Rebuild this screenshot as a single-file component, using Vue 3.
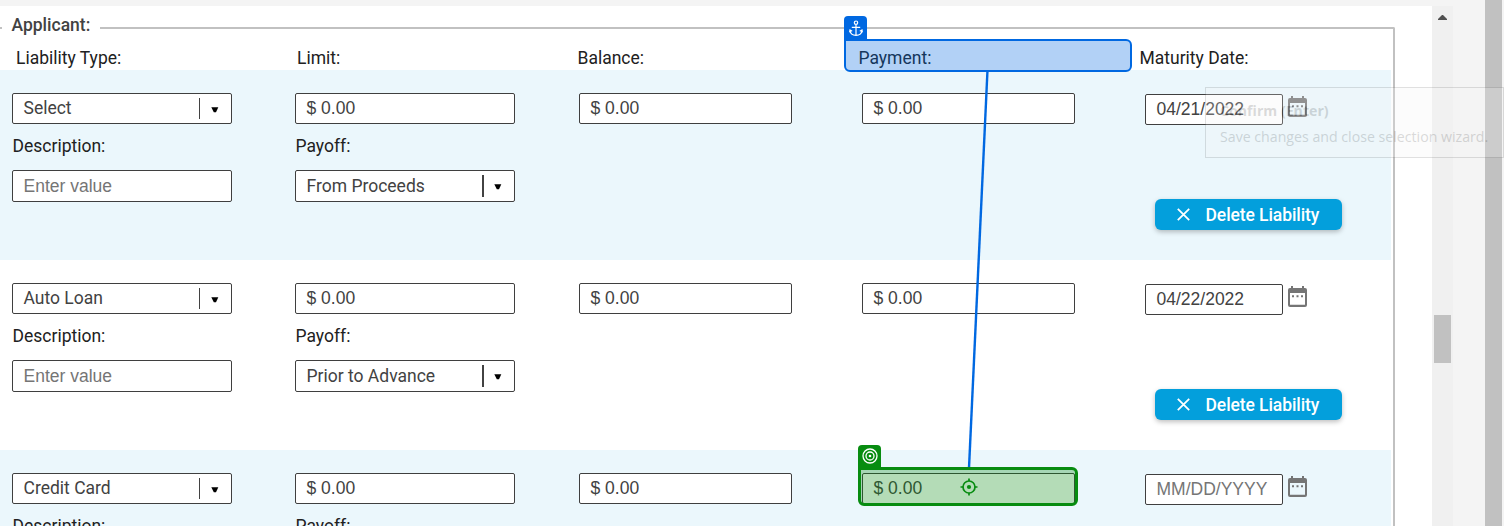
<script setup>
const headings = ['Liability Type:', 'Limit:', 'Balance:', 'Payment:', 'Maturity Date:']
const rows = [
  { type: 'Select', payoff: 'From Proceeds', date: '04/21/2022' },
  { type: 'Auto Loan', payoff: 'Prior to Advance', date: '04/22/2022' },
  { type: 'Credit Card', payoff: 'Select', date: '' }
]
</script>

<template>
  <div class="page">
    <div class="content">
      <div class="fieldset">
        <div class="legend"><i class="stub"></i><b>Applicant:</b><i class="rule"></i></div>
        <div class="body">
          <div class="grid headings">
            <span v-for="h in headings" :key="h">{{ h }}</span>
          </div>
          <div v-for="(row, i) in rows" :key="i" class="liability" :class="{ tinted: i % 2 === 0 }">
            <div class="grid">
              <div class="cell">
                <div class="box select">
                  <span>{{ row.type }}</span><i class="divider"></i>
                  <svg class="caret" width="8" height="6" viewBox="0 0 8 6"><path d="M.3.2h7L5 5.2H2.8z" /></svg>
                </div>
                <label>Description:</label>
                <div class="box input tall placeholder">Enter value</div>
              </div>
              <div class="cell">
                <div class="box input">$ 0.00</div>
                <label>Payoff:</label>
                <div class="box select tall">
                  <span>{{ row.payoff }}</span><i class="divider thick"></i>
                  <svg class="caret" width="8" height="6" viewBox="0 0 8 6"><path d="M.3.2h7L5 5.2H2.8z" /></svg>
                </div>
              </div>
              <div class="cell"><div class="box input">$ 0.00</div></div>
              <div class="cell"><div class="box input">$ 0.00</div></div>
              <div class="cell last">
                <div class="dateline">
                  <div class="box input date" :class="{ placeholder: !row.date }">{{ row.date || 'MM/DD/YYYY' }}</div>
                  <svg width="19" height="21" viewBox="0 0 19 21">
                    <path fill="#757575" fill-rule="evenodd" d="M3 0h2v2h9V0h2v2h1q2 0 2 2v15q0 2-2 2H2q-2 0-2-2V4q0-2 2-2h1zM2 7v11.800h15V7z" />
                    <path fill="#757575" d="M4 9.300h2v2H4zM8.500 9.300h2v2h-2zM13 9.300h2v2h-2z" />
                  </svg>
                </div>
                <button type="button">
                  <svg width="13" height="13" viewBox="0 0 13 13"><path d="M.8.8l11.400 11.400M12.200.8L.8 12.200" /></svg>
                  Delete Liability
                </button>
              </div>
            </div>
          </div>
        </div>
      </div>
    </div>
    <div class="scrollbar">
      <svg width="9" height="5" viewBox="0 0 9 5"><path d="M4 0h1l4 4v1H0V4z" fill="#505050" /></svg>
      <i class="thumb"></i>
    </div>
    <div class="outer-scroll"></div>

    <svg class="link" width="1504" height="526" viewBox="0 0 1504 526">
      <path d="M987.500 70L969 468" stroke="#0068e1" stroke-width="2.400" fill="none" />
    </svg>
    <div class="mark anchor">
      <div class="tag">
        <svg width="14" height="17" viewBox="0 0 14 17" fill="none" stroke="#fff" stroke-width="1.200">
          <circle cx="7" cy="2.700" r="1.700" />
          <path d="M7 4.400v11M2.800 7.300h8.400M1 10.500q.5 4.600 6 4.900q5.500-.3 6-4.900M.6 12.300l.4-2.300 2.200 1.200M13.400 12.300L13 10l-2.200 1.200" />
        </svg>
      </div>
    </div>
    <div class="mark target">
      <div class="tag">
        <svg width="16" height="16" viewBox="0 0 16 16" fill="none" stroke="#fff" stroke-width="1.300">
          <circle cx="8" cy="8" r="7" /><circle cx="8" cy="8" r="4" /><circle cx="8" cy="8" r="1.300" fill="#fff" stroke="none" />
        </svg>
      </div>
      <svg class="aim" width="18" height="18" viewBox="0 0 18 18" fill="none" stroke="#078c10" stroke-width="1.700">
        <circle cx="9" cy="9" r="6" /><path d="M9 .5V3M9 15v2.500M.5 9H3M15 9h2.500" />
        <circle cx="9" cy="9" r="2.100" fill="#078c10" stroke="none" />
      </svg>
    </div>
    <div class="tooltip"><b>Confirm (Enter)</b><span>Save changes and close selection wizard.</span></div>
  </div>
</template>

<style>
body { margin: 0; overflow: hidden; }
</style>

<style scoped>
* { box-sizing: border-box; }
.page { position: relative; width: 1504px; height: 526px; overflow: hidden; display: flex; background: #f4f4f4; padding-top: 6px; font: 17.500px/20px Roboto, sans-serif; color: #212121; }
.content { width: 1432px; height: 520px; background: #fff; overflow: hidden; }
.legend { display: flex; width: 1395px; height: 38px; }
.legend b { width: 98px; padding: 9px 0 0 9.500px; font-weight: 500; color: #424242; }
.stub { width: 2px; height: 2px; margin-top: 21px; background: #c1c1c1; }
.rule { flex: 1; margin-top: 21px; border: solid #c1c1c1; border-width: 2px 2px 0 0; border-radius: 0 2px 0 0; }
.body { width: 1395px; border-right: 2px solid #c1c1c1; }
.grid { display: grid; grid-template-columns: 283px 284px 283px 283px 246px; }
.headings { grid-template-columns: 281px 280.500px 281px 281px 1fr; height: 26px; padding: 4px 0 0 16px; }
.liability { width: 1391px; height: 190px; padding: 23px 0 0 12px; }
.tinted { background: #ebf7fc; }
.cell { display: flex; flex-direction: column; width: 213px; }
.cell:nth-child(-n+2) { width: 220px; }
.box { height: 31px; padding: 0 10.500px; border: 1px solid #3f3f3f; border-radius: 2px; background: #fff; line-height: 28px; color: #424242; }
.input { font-family: "Liberation Sans", Arial, sans-serif; font-size: 17.500px; line-height: 29px; }
.tall { height: 32px; line-height: 30px; }
.input.tall { line-height: 31px; }
.box.placeholder { color: #757575; }
.select { display: flex; align-items: center; padding-right: 12px; }
.select span { flex: 1; height: 29px; }
.select.tall span { height: 30px; }
.divider { width: 1px; height: 21px; margin-right: 11px; background: #424242; }
.divider.thick { width: 2px; height: 22px; margin-right: 10px; }
.caret { margin-top: 2px; fill: #000; }
label { height: 46px; padding: 12px 0 0 .5px; }
.cell.last { width: 230px; padding-top: 1px; }
.dateline { display: flex; gap: 5px; }
.dateline svg { margin-top: 2px; }
.date { width: 138px; }
button { display: flex; align-items: center; gap: 15.500px; width: 187px; height: 31px; margin: 74px 0 0 10px; padding: 0 0 0 22px; border: 0; border-radius: 6px; background: #039fdc; color: #fff; font: 500 17.500px/20px Roboto, sans-serif; letter-spacing: -.08px; white-space: nowrap; box-shadow: 0 2px 5px rgba(0, 0, 0, .25); }
button svg { fill: none; stroke: #fff; stroke-width: 1.800; }
.scrollbar { display: flex; flex-direction: column; align-items: center; width: 21px; padding-top: 9px; background: #f0f0f0; }
.thumb { width: 17px; height: 48px; margin-top: 295px; background: #c1c1c1; }
.outer-scroll { width: 17px; margin: -6px 0 0 32px; background: #c1c1c1; }
.link { position: absolute; left: 0; top: 0; }
.mark { position: absolute; border-radius: 6px; }
.tag { position: absolute; display: flex; align-items: center; justify-content: center; width: 23px; height: 24px; border-radius: 4px 4px 0 0; }
.anchor { left: 844px; top: 39px; width: 288px; height: 33px; border: 2px solid #0068e1; background: rgba(0, 104, 225, .3); border-top-left-radius: 0; }
.anchor .tag { left: -2px; top: -25px; background: #0068e1; }
.target { left: 858px; top: 467px; width: 220px; height: 39px; border: 3px solid #078c10; background: rgba(7, 140, 16, .3); border-top-left-radius: 0; }
.target .tag { left: -3px; top: -25px; padding-bottom: 2px; background: #078c10; }
.aim { position: absolute; left: 98.500px; top: 8px; }
.tooltip { position: absolute; left: 1205px; top: 87px; width: 299px; height: 71px; padding: 13px 14px; border: 1px solid #767676; background: #f5f5f5; opacity: .22; font: 14.170px/20px "Open Sans", sans-serif; color: #575757; white-space: nowrap; }
.tooltip b, .tooltip span { display: block; height: 26px; }
</style>
